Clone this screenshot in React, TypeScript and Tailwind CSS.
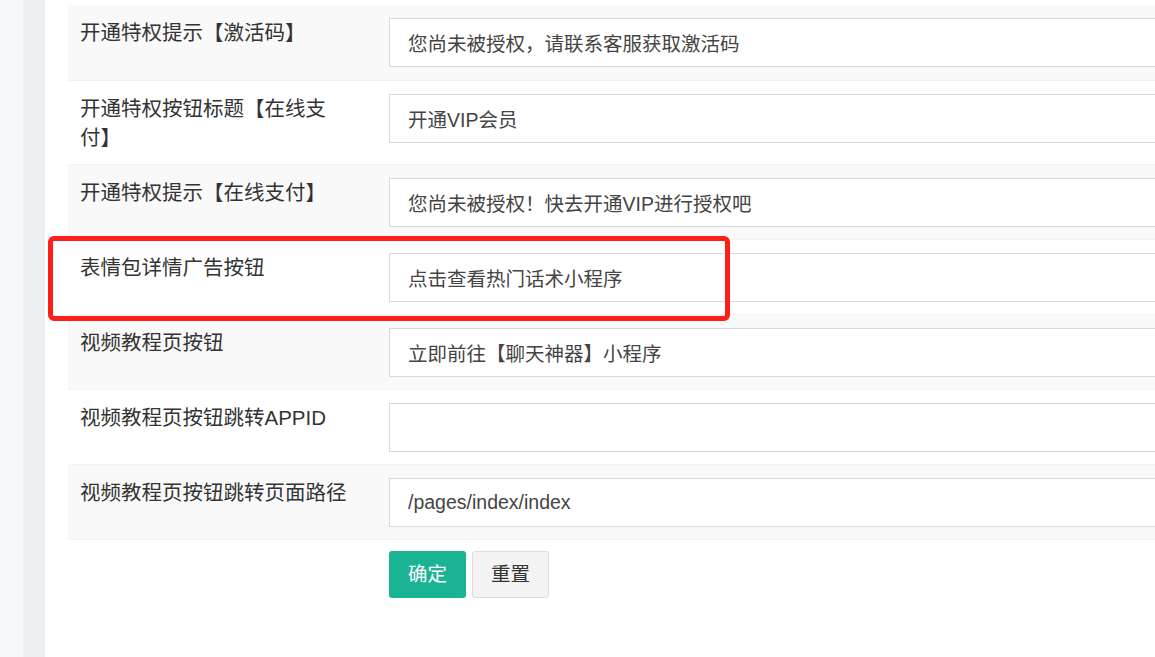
import React from 'react';

type Field = { label: string; value: string; tall?: boolean };

const fields: Field[] = [
  { label: '开通特权提示【激活码】', value: '您尚未被授权，请联系客服获取激活码' },
  { label: '开通特权按钮标题【在线支付】', value: '开通VIP会员', tall: true },
  { label: '开通特权提示【在线支付】', value: '您尚未被授权！快去开通VIP进行授权吧' },
  { label: '表情包详情广告按钮', value: '点击查看热门话术小程序' },
  { label: '视频教程页按钮', value: '立即前往【聊天神器】小程序' },
  { label: '视频教程页按钮跳转APPID', value: '' },
  { label: '视频教程页按钮跳转页面路径', value: '/pages/index/index' },
];

const App: React.FC = () => {
  return (
    <div
      className="w-[1155px] h-[657px] overflow-hidden flex bg-white text-[#333]"
      style={{ fontFamily: '"Liberation Sans", "Microsoft YaHei", "Noto Sans CJK SC", sans-serif' }}
    >
      {/* side strips */}
      <div className="w-[23px] shrink-0 bg-[#f7f8fa]" />
      <div className="w-[22px] shrink-0 bg-[#edf0f3]" />

      {/* main */}
      <main className="flex-1 pl-[23px] pt-[5px]">
        <form className="w-[1120px]">
          {fields.map((f, i) => (
            <div
              key={f.label}
              className={`relative flex pt-[13px] ${f.tall ? 'pb-[12px]' : i === 0 ? 'pb-[13px]' : 'pb-[12px]'} border-b border-[#f2f2f2] ${
                i % 2 === 0 ? 'bg-[#f9f9f9]' : 'bg-white'
              }`}
            >
              <label className="w-[321px] shrink-0 pl-[12px] pr-[38px] text-[20.5px] leading-[29px]">
                {f.label}
              </label>
              <div className="flex-1">
                <input
                  readOnly
                  value={f.value}
                  className="w-full h-[49px] border border-[#d6d9df] bg-white pl-[18px] text-[19.5px] text-[#444] outline-none"
                />
              </div>
              {i === 3 && (
                <div className="absolute z-10 left-[-20px] top-[-4px] w-[682px] h-[85px] border-[5px] border-[#fe1f18] rounded-[6px] pointer-events-none" />
              )}
            </div>
          ))}

          <div className="flex gap-[6px] pl-[321px] pt-[11px]">
            <button
              type="button"
              className="w-[77px] h-[47px] rounded-[3px] bg-[#1ab394] text-white text-[19.5px]"
            >
              确定
            </button>
            <button
              type="button"
              className="w-[77px] h-[47px] rounded-[3px] border border-[#dcdcdc] bg-[#f3f3f3] text-[#333] text-[19.5px]"
            >
              重置
            </button>
          </div>
        </form>
      </main>
    </div>
  );
};

export default App;
